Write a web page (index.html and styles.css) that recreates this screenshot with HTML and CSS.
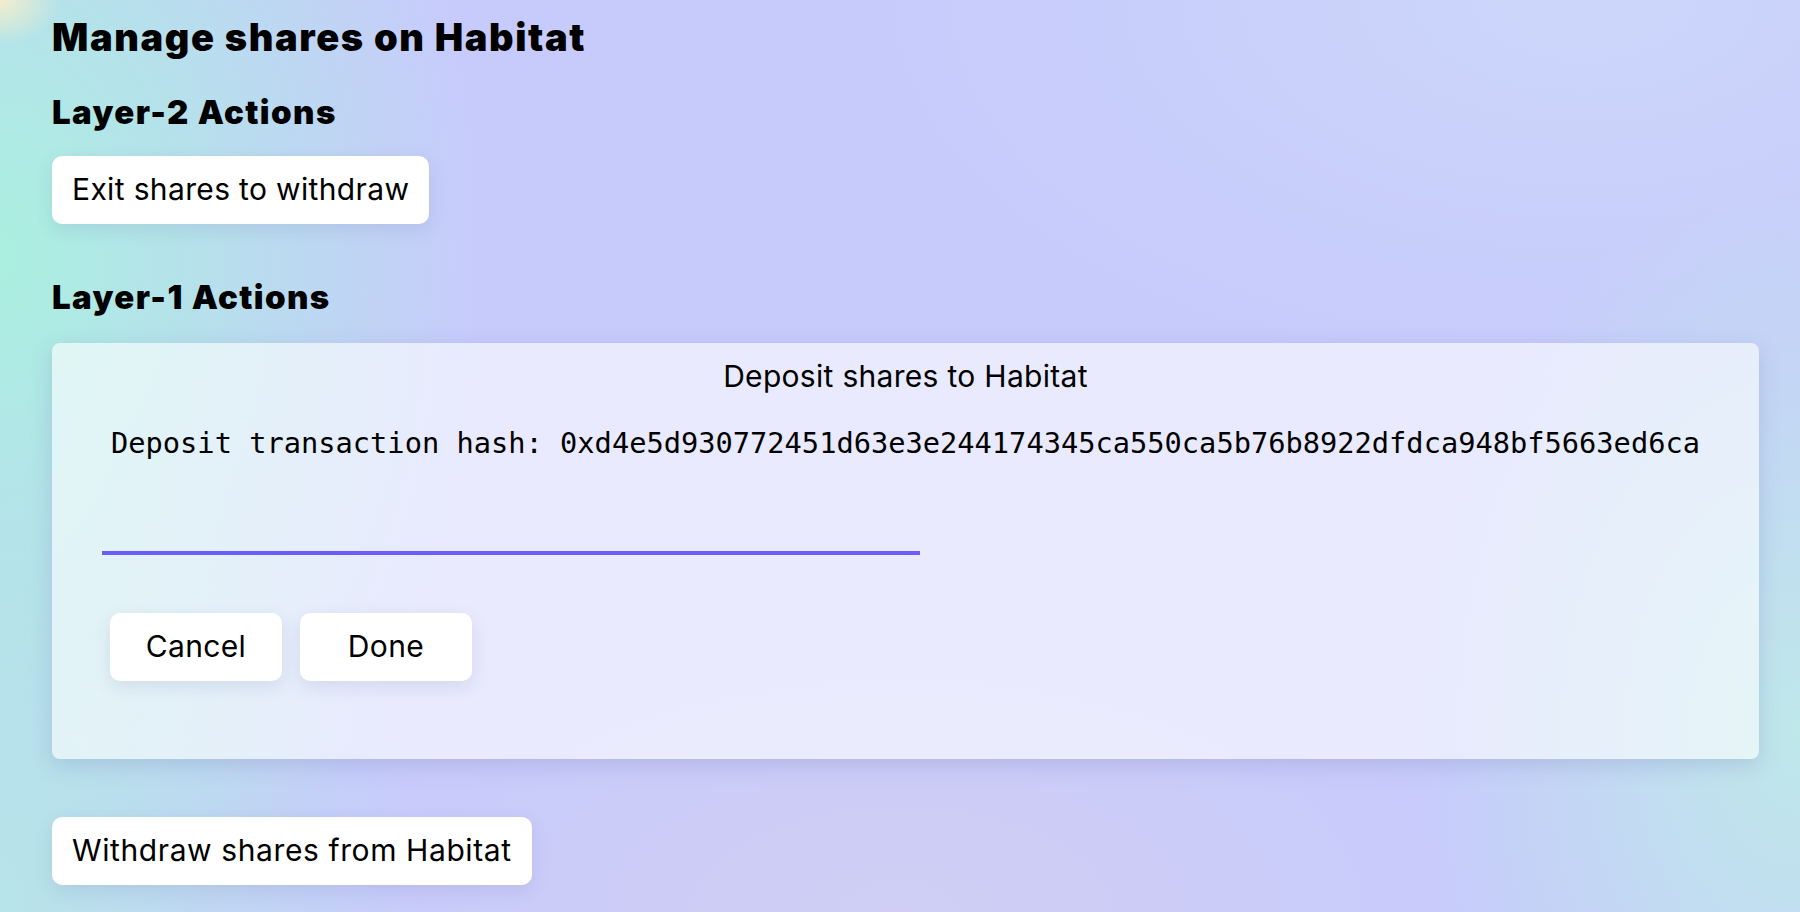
FILE: index.html
```html
<!DOCTYPE html>
<html lang="en">
<head>
<meta charset="utf-8">
<title>Manage shares on Habitat</title>
<link rel="stylesheet" href="styles.css">
</head>
<body>
<main class="page">
  <h1 class="title">Manage shares on Habitat</h1>
  <h2 class="section-title l2">Layer-2 Actions</h2>
  <button class="btn btn-exit" type="button">Exit shares to withdraw</button>
  <h2 class="section-title l1">Layer-1 Actions</h2>
  <section class="card">
    <div class="card-title">Deposit shares to Habitat</div>
    <p class="hash">Deposit transaction hash: 0xd4e5d930772451d63e3e244174345ca550ca5b76b8922dfdca948bf5663ed6ca</p>
    <input class="field" type="text" aria-label="Deposit amount">
    <div class="actions">
      <button class="btn btn-fixed" type="button">Cancel</button>
      <button class="btn btn-fixed" type="button">Done</button>
    </div>
  </section>
  <button class="btn btn-withdraw" type="button">Withdraw shares from Habitat</button>
</main>
</body>
</html>
```

FILE: styles.css
```css
html, body {
  margin: 0;
  padding: 0;
  height: 100%;
}

body {
  font-family: "Inter", "Liberation Sans", sans-serif;
  color: #000;
  overflow: hidden;
  background-color: #c7cbfb;
  background-image:
    radial-gradient(ellipse 60px 45px at 0 0, rgba(248, 238, 204, 0.95), rgba(248, 238, 204, 0) 100%),
    radial-gradient(ellipse 480px 720px at 0 28%, rgba(170, 240, 224, 1), rgba(170, 240, 224, 0) 100%),
    radial-gradient(ellipse 380px 560px at 100% 80%, rgba(190, 232, 234, 1), rgba(190, 232, 234, 0) 100%),
    radial-gradient(ellipse 700px 380px at 88% 0, rgba(204, 214, 250, 1), rgba(204, 214, 250, 0) 100%),
    radial-gradient(ellipse 600px 300px at 50% 100%, rgba(208, 206, 244, 1), rgba(208, 206, 244, 0) 100%),
    radial-gradient(ellipse 420px 500px at 0 100%, rgba(184, 226, 234, 1), rgba(184, 226, 234, 0) 100%);
}

.page {
  box-sizing: border-box;
  min-height: 100%;
  padding: 15px 41px 0 52px;
  display: flex;
  flex-direction: column;
  align-items: flex-start;
}

.title {
  margin: 0;
  font-size: 38px;
  line-height: 44px;
  font-weight: 900;
  letter-spacing: 1.6px;
}

.section-title {
  margin: 0;
  font-size: 33px;
  line-height: 40px;
  font-weight: 900;
  letter-spacing: 1.4px;
}

.l2 { margin-top: 33px; }
.l1 { margin-top: 53px; }

.btn {
  font-family: "Inter", "Liberation Sans", sans-serif;
  font-size: 30px;
  line-height: 36px;
  font-weight: 400;
  letter-spacing: 0.35px;
  color: #000;
  background: #fff;
  border: none;
  border-radius: 10px;
  padding: 15px 20px 17px;
  box-shadow: 0 6px 18px rgba(70, 80, 140, 0.12);
  cursor: pointer;
}

.btn-exit { margin-top: 24px; }

.btn-fixed {
  width: 172px;
  padding-left: 0;
  padding-right: 0;
  text-align: center;
}

.btn-withdraw {
  margin-top: 58px;
  letter-spacing: 0.6px;
}

.card {
  box-sizing: border-box;
  margin-top: 26px;
  align-self: stretch;
  height: 416px;
  padding: 15px 50px 78px;
  border-radius: 8px;
  background: rgba(255, 255, 255, 0.6);
  box-shadow: 0 6px 22px rgba(80, 80, 150, 0.18);
}

.card-title {
  font-size: 30px;
  line-height: 36px;
  letter-spacing: 0.3px;
  text-align: center;
}

.hash {
  margin: 31px 0 0;
  font-family: "DejaVu Sans Mono", "Liberation Mono", monospace;
  font-size: 28.7px;
  line-height: 36px;
  text-align: center;
  white-space: nowrap;
}

.field {
  display: block;
  box-sizing: border-box;
  margin-top: 46px;
  width: 818px;
  height: 48px;
  padding: 0;
  border: none;
  border-bottom: 4px solid #6a5cff;
  background: transparent;
  outline: none;
  font-size: 28px;
}

.actions {
  display: flex;
  gap: 18px;
  margin-top: 58px;
  padding-left: 8px;
}
```
